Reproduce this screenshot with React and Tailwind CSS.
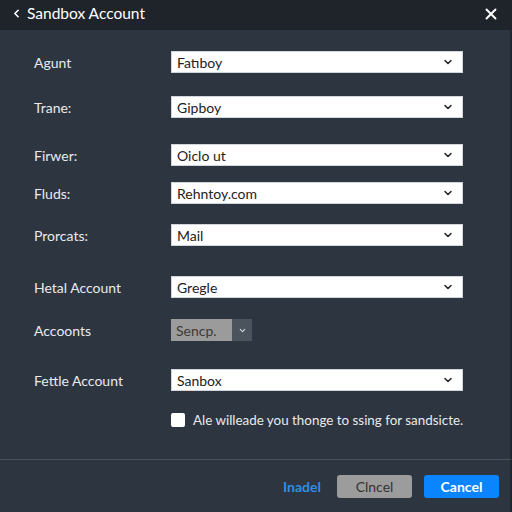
import React from "react";
import { ChevronLeft, ChevronDown, X } from "lucide-react";

// Form rows for the sandbox account dialog; gap = space above the row
const rows = [
  { label: "Agunt", value: "Fatıboy", gap: "mt-[21px]" },
  { label: "Trane:", value: "Gipboy", gap: "mt-[23px]" },
  { label: "Firwer:", value: "Oiclo ut", gap: "mt-[26px]" },
  { label: "Fluds:", value: "Rehntoy.com", gap: "mt-[16px]" },
  { label: "Prorcats:", value: "Mail", gap: "mt-[20px]" },
  { label: "Hetal Account", value: "Gregle", gap: "mt-[30px]" },
  { label: "Accoonts", value: "Sencp.", gap: "mt-[21px]", compact: true },
  { label: "Fettle Account", value: "Sanbox", gap: "mt-[28px]" },
];

const SelectBox = ({ value }) => (
  <div className="flex h-[22px] w-[292px] items-center justify-between border border-gray-300 bg-white pl-[5px] pr-[8px] text-[14px] text-[#222]">
    <span>{value}</span>
    <ChevronDown className="h-[12px] w-[12px] text-[#222]" strokeWidth={3} />
  </div>
);

const CompactSelect = ({ value }) => (
  <div className="flex h-[22px] w-[81px] text-[14px]">
    <div className="flex w-[61px] items-center bg-[#9b9b9b] pl-[5px] text-[#3a3a3a]">
      {value}
    </div>
    <div className="flex flex-1 items-center justify-center bg-[#4b535c]">
      <ChevronDown className="h-[9px] w-[9px] text-gray-300" strokeWidth={3} />
    </div>
  </div>
);

export default function App() {
  return (
    <div
      className="flex h-[512px] w-[512px] flex-col bg-[#2d3540] text-[#e8eaed]"
      style={{ fontFamily: "Lato, 'Noto Sans', sans-serif" }}
    >
      {/* Title bar */}
      <div className="flex h-[30px] items-center justify-between bg-[#1f242b] pb-[3px] pl-[10px] pr-[12px]">
        <div className="flex items-center gap-[4px]">
          <ChevronLeft className="h-[13px] w-[13px] text-white" strokeWidth={3} />
          <span className="text-[15.5px] text-white">Sandbox Account</span>
        </div>
        <X className="h-[18px] w-[18px] text-white" strokeWidth={2.5} />
      </div>

      {/* Form */}
      <div className="flex flex-1 flex-col border-r-2 border-[#22272e] pl-[34px]">
        {rows.map((row) => (
          <div key={row.label} className={`${row.gap} flex h-[22px] items-center`}>
            <span className="w-[137px] text-[14px] text-[#e8eaed]">{row.label}</span>
            {row.compact ? <CompactSelect value={row.value} /> : <SelectBox value={row.value} />}
          </div>
        ))}

        <div className="mt-[18px] flex h-[22px] items-center pl-[137px]">
          <div className="h-[14px] w-[14px] rounded-[2px] bg-white" />
          <span className="ml-[8px] text-[13.4px] text-[#e8eaed]">
            Ale willeade you thonge to ssing for sandsicte.
          </span>
        </div>
      </div>

      {/* Footer */}
      <div className="flex h-[53px] items-center justify-end gap-[16px] border-r-2 border-t border-[#22272e] border-t-[#4a525c] pr-[11px]">
        <span className="text-[14px] font-bold text-[#2f8ee6]">Inadel</span>
        <button className="h-[23px] w-[75px] rounded-[3px] bg-[#9c9c9c] text-[14px] text-[#333]">
          Clncel
        </button>
        <button className="ml-[-4px] h-[23px] w-[75px] rounded-[3px] bg-[#0a84ff] text-[14px] font-bold text-white">
          Cancel
        </button>
      </div>
    </div>
  );
}
